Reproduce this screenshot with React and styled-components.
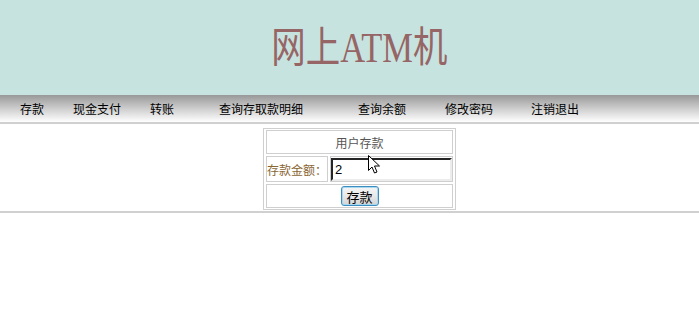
import React, { useState } from 'react';
import styled, { createGlobalStyle } from 'styled-components';

const GlobalStyle = createGlobalStyle`
  html, body {
    margin: 0;
    padding: 0;
    background: #fff;
    font-family: "Liberation Sans", "Noto Sans CJK SC", sans-serif;
    font-size: 12px;
  }
`;

const Header = styled.header`
  height: 95px;
  background: #c7e3df;
  display: flex;
  justify-content: center;
  align-items: center;
  padding-left: 20px;
`;

const Title = styled.h1`
  margin: 0;
  font-weight: normal;
  font-size: 42px;
  line-height: 1;
  color: #966565;
  font-family: "Noto Sans CJK SC", "Liberation Serif", serif;
  transform: scaleX(0.82);
  padding-bottom: 4px;

  span {
    font-family: "Liberation Serif", serif;
  }
`;

const Nav = styled.nav`
  height: 27px;
  background: linear-gradient(to bottom, #989898 0%, #c8c8c8 45%, #ffffff 100%);
  display: flex;
  align-items: center;
  padding-left: 20px;
`;

const NavLink = styled.a`
  width: ${({ $w }) => $w}px;
  flex-shrink: 0;
  color: #000;
  text-decoration: none;
  font-size: 12px;
  font-family: "Noto Sans CJK SC", sans-serif;
  cursor: pointer;
`;

const Content = styled.section`
  border-top: 2px solid #d0d0d0;
  border-bottom: 2px solid #d0d0d0;
  padding: 4px 0 1px;
  display: flex;
  justify-content: center;
`;

const FormTable = styled.div`
  position: relative;
  border: 1px solid #cfcfcf;
  padding: 1px 2px;
  display: grid;
  grid-template-columns: 62px 123px;
  gap: 2px;
  margin-left: 20px;
`;

const Cell = styled.div`
  border: 1px solid #cfcfcf;
  box-sizing: border-box;
  height: ${({ $h }) => $h}px;
  grid-column: ${({ $span }) => ($span ? '1 / 3' : 'auto')};
  display: flex;
  align-items: center;
  justify-content: ${({ $center }) => ($center ? 'center' : 'flex-start')};
  font-family: "Noto Sans CJK SC", sans-serif;
  font-size: 12px;
  color: ${({ $color }) => $color || '#000'};
`;

const AmountInput = styled.input`
  box-sizing: border-box;
  width: 121px;
  height: 23px;
  margin: 0;
  padding: 0 2px;
  border: 2px inset #ececec;
  border-top-color: #7a7a7a;
  border-left-color: #7a7a7a;
  font-family: "Liberation Sans", sans-serif;
  font-size: 13px;
  color: #000;
  outline: none;
`;

const SubmitButton = styled.button`
  box-sizing: border-box;
  width: 38px;
  height: 20px;
  padding: 0;
  border: 1px solid #3c8dc0;
  border-radius: 3px;
  background: linear-gradient(to bottom, #f6f6f6 0%, #e8e8e8 50%, #d4d4d4 100%);
  box-shadow: inset 0 0 0 1px #a8d8f0;
  font-family: "Noto Sans CJK SC", sans-serif;
  font-size: 13px;
  color: #000;
  cursor: pointer;
`;

const Pointer = styled.svg`
  position: absolute;
  left: 104px;
  top: 26px;
  pointer-events: none;
`;

const navItems = [
  ['存款', 53],
  ['现金支付', 77],
  ['转账', 69],
  ['查询存取款明细', 139],
  ['查询余额', 87],
  ['修改密码', 86],
  ['注销退出', 80],
];

const App = () => {
  const [amount, setAmount] = useState('2');

  return (
    <>
      <GlobalStyle />
      <Header>
        <Title>
          网上<span>ATM</span>机
        </Title>
      </Header>
      <Nav>
        {navItems.map(([label, w]) => (
          <NavLink key={label} $w={w}>
            {label}
          </NavLink>
        ))}
      </Nav>
      <Content>
        <FormTable>
          <Cell $span $center $h={24} $color="#555">
            用户存款
          </Cell>
          <Cell $h={26} $color="#8a6633">
            存款金额：
          </Cell>
          <Cell $h={26}>
            <AmountInput value={amount} onChange={(e) => setAmount(e.target.value)} />
          </Cell>
          <Cell $span $center $h={24}>
            <SubmitButton>存款</SubmitButton>
          </Cell>
          <Pointer width="13" height="20" viewBox="0 0 13 20">
            <path
              d="M0.5 0.5 L0.5 15.5 L4 12 L6.5 18 L9 17 L6.5 11 L11.5 11 Z"
              fill="#fff"
              stroke="#000"
              strokeWidth="1"
            />
          </Pointer>
        </FormTable>
      </Content>
    </>
  );
};

export default App;
